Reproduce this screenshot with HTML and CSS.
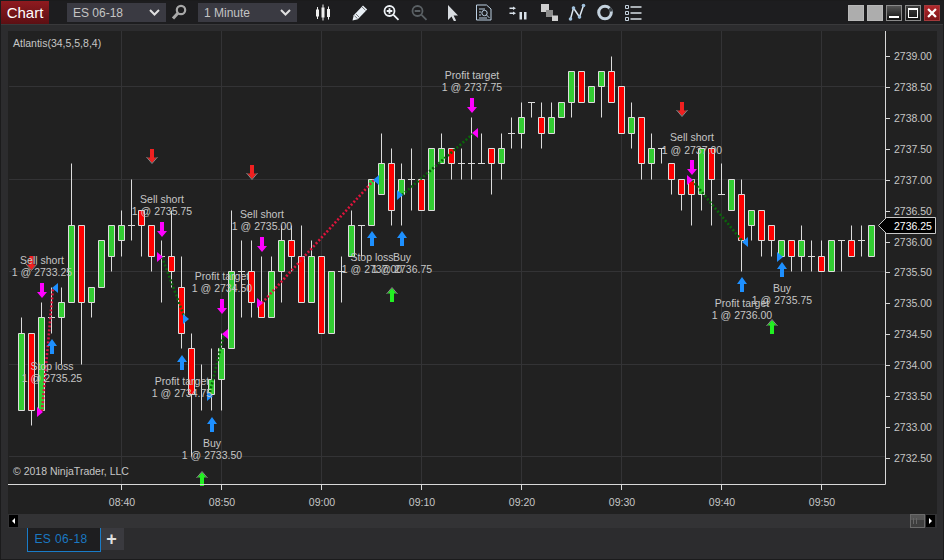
FILE: index.html
```html
<!DOCTYPE html>
<html lang="en">
<head>
<meta charset="utf-8">
<title>Chart</title>
<link rel="stylesheet" href="styles.css">
</head>
<body>
<div class="window">
  <header class="toolbar">
    <button class="chart-btn">Chart</button>
    <div class="select select-instrument"><span>ES 06-18</span><svg class="chev" viewBox="0 0 11 7"><path d="M1 1l4.500 4.500L10 1"/></svg></div>
    <svg class="ic ic-search" viewBox="0 0 18 18"><circle cx="11" cy="7" r="4.200"/><path d="M8 10l-5 5.500"/></svg>
    <div class="select select-interval"><span>1 Minute</span><svg class="chev" viewBox="0 0 11 7"><path d="M1 1l4.500 4.500L10 1"/></svg></div>
    <svg class="ic ic-candles" viewBox="0 0 18 18"><path class="wk" d="M3.500 4v12M9 1.500v16M14.500 3.500v13"/><path class="fl" d="M2 6.500h3v7H2zM7.500 4.500h3v10h-3zM13 6h3v8h-3z"/></svg>
    <svg class="ic ic-pencil" viewBox="0 0 18 18"><path class="fl" d="M1.500 17.500l1.200-5.200 9.300-9.800 4.200 4-9.400 9.700z"/><path class="dk" d="M3.500 12.800l3 2.800M5 11l3 3M11 4l3.500 3.300"/></svg>
    <svg class="ic ic-zoomin" viewBox="0 0 18 18"><circle cx="6.500" cy="8" r="5"/><path d="M10.500 11.800l5 5M6.500 5.200v5.600M3.700 8h5.600"/></svg>
    <svg class="ic ic-zoomout" viewBox="0 0 18 18"><circle cx="7.500" cy="8" r="5"/><path d="M11.500 11.800l5 5M4.700 8h5.600"/></svg>
    <svg class="ic ic-pointer" viewBox="0 0 18 18"><path d="M3 2v15l3.500-3.500 2.600 5 2-1-2.500-5H13z"/></svg>
    <svg class="ic ic-report" viewBox="0 0 18 18"><path class="ol" d="M1.500 2h10l4.500 4v11H1.500z"/><path class="ol" d="M4 6h6M4 9h2M4 12h2M4 15h8"/><circle class="ol" cx="9.500" cy="10" r="2.700"/><path class="ol" d="M11.500 12l3 3"/></svg>
    <svg class="ic ic-bars" viewBox="0 0 18 18"><path class="fl" d="M0.500 4.500h3.500V3.500l3 1.700-3 1.700V6H0.500zM0.500 9.500h3.500V8.500l3 1.700-3 1.700V11H0.500zM10.500 9h2.500v7.500h-2.500zM15 9h2.500v7.500H15z"/></svg>
    <svg class="ic ic-stack" viewBox="0 0 18 18"><path class="a" d="M1 1h8v8H1z"/><path class="b" d="M6 7h7v7H6z"/><path class="a" d="M12 12.500h6V18h-6z"/></svg>
    <svg class="ic ic-node" viewBox="0 0 18 18"><path d="M2.500 16l3-11 6 9 4-11.500"/><circle cx="2.500" cy="16" r="1.800"/><circle cx="5.500" cy="5" r="1.800"/><circle cx="11.500" cy="14" r="1.800"/><circle cx="15.500" cy="2.500" r="1.800"/></svg>
    <svg class="ic ic-ring" viewBox="0 0 18 18"><circle cx="9" cy="9.500" r="6.300"/><path d="M13.500 5.200A6.300 6.300 0 0 1 15.200 8.500"/></svg>
    <svg class="ic ic-list" viewBox="0 0 18 18"><path class="sq" d="M1.500 2.500h3v3h-3zM1.500 8.500h3v3h-3zM1.500 14.500h3v3h-3z"/><path class="ln" d="M6.500 4h11M6.500 10h11M6.500 16h11"/></svg>
    <div class="win-btns">
      <span class="wb wb-blank"></span>
      <span class="wb wb-blank"></span>
      <span class="wb wb-min"><i></i></span>
      <span class="wb wb-max"><i></i></span>
      <span class="wb wb-close"><svg viewBox="0 0 16 16"><path d="M3.500 3.500l9 9M12.500 3.500l-9 9"/></svg></span>
    </div>
  </header>

  <main class="panel">
    <svg class="chart" viewBox="8 31 929 483" width="929" height="483">
      <path class="grid" d="M121.500 31V484M221.500 31V484M321.500 31V484M421.500 31V484M521.500 31V484M621.500 31V484M721.500 31V484M821.500 31V484M9 86.500H885M9 179.500H885M9 271.500H885M9 364.500H885M9 456.500H885"/>

      <path class="wick" d="M21.500 317.500V410.500M31.500 333.500V425.500M41.500 302.500V410.500M51.500 287.500V333.500M48 317.500h7M61.500 287.500V364.500M71.500 163.500V302.500M81.500 225.500V364.500M91.500 287.500V317.500M111.500 225.500V271.500M121.500 210.500V256.500M131.500 179.500V240.500M128 225.500h7M141.500 210.500V256.500M151.500 225.500V271.500M161.500 240.500V302.500M158 256.500h7M171.500 210.500V287.500M181.500 256.500V348.500M191.500 333.500V456.500M201.500 364.500V410.500M211.500 348.500V410.500M221.500 333.500V410.500M231.500 210.500V348.500M241.500 240.500V317.500M238 271.500h7M251.500 240.500V317.500M261.500 256.500V317.500M271.500 256.500V317.500M281.500 225.500V302.500M291.500 225.500V271.500M301.500 225.500V302.500M311.500 240.500V302.500M341.500 256.500V302.500M338 271.500h7M351.500 210.500V256.500M361.500 225.500V256.500M358 225.500h7M381.500 133.500V194.500M391.500 148.500V225.500M401.500 163.500V225.500M411.500 148.500V210.500M408 179.500h7M441.500 133.500V163.500M451.500 148.500V179.500M461.500 148.500V179.500M458 163.500h7M471.500 117.500V179.500M468 163.500h7M481.500 133.500V163.500M478 163.500h7M491.500 148.500V194.500M501.500 133.500V179.500M511.500 117.500V148.500M508 133.500h7M521.500 102.500V148.500M531.500 102.500V117.500M528 102.500h7M541.500 102.500V148.500M551.500 102.500V133.500M571.500 71.500V117.500M601.500 71.500V117.500M611.500 56.500V102.500M631.500 102.500V148.500M641.500 117.500V179.500M651.500 133.500V179.500M661.500 148.500V163.500M658 148.500h7M671.500 163.500V194.500M681.500 179.500V210.500M691.500 179.500V225.500M701.500 148.500V210.500M711.500 148.500V225.500M721.500 163.500V194.500M718 194.500h7M741.500 179.500V271.500M751.500 210.500V240.500M761.500 210.500V256.500M771.500 225.500V256.500M791.500 240.500V271.500M801.500 225.500V271.500M811.500 240.500V271.500M808 256.500h7M821.500 240.500V271.500M841.500 240.500V271.500M838 240.500h7M851.500 225.500V256.500M861.500 225.500V256.500M858 240.500h7"/>
      <path class="up" d="M18.500 333.500h6V410.500h-6zM38.500 317.500h6V410.500h-6zM58.500 302.500h6V317.500h-6zM68.500 225.500h6V302.500h-6zM88.500 287.500h6V302.500h-6zM98.500 240.500h6V287.500h-6zM108.500 225.500h6V256.500h-6zM118.500 225.500h6V240.500h-6zM208.500 379.500h6V394.500h-6zM218.500 348.500h6V379.500h-6zM228.500 271.500h6V348.500h-6zM268.500 271.500h6V317.500h-6zM278.500 240.500h6V271.500h-6zM308.500 256.500h6V302.500h-6zM328.500 271.500h6V333.500h-6zM348.500 225.500h6V256.500h-6zM368.500 179.500h6V225.500h-6zM378.500 163.500h6V194.500h-6zM398.500 179.500h6V194.500h-6zM428.500 148.500h6V210.500h-6zM438.500 148.500h6V163.500h-6zM498.500 148.500h6V163.500h-6zM518.500 117.500h6V133.500h-6zM548.500 117.500h6V133.500h-6zM558.500 102.500h6V117.500h-6zM568.500 71.500h6V102.500h-6zM588.500 86.500h6V102.500h-6zM598.500 71.500h6V86.500h-6zM628.500 117.500h6V133.500h-6zM648.500 148.500h6V163.500h-6zM698.500 148.500h6V194.500h-6zM728.500 179.500h6V210.500h-6zM748.500 210.500h6V225.500h-6zM778.500 240.500h6V256.500h-6zM798.500 240.500h6V256.500h-6zM828.500 240.500h6V271.500h-6zM868.500 225.500h6V256.500h-6z"/>
      <path class="down" d="M28.500 333.500h6V410.500h-6zM78.500 225.500h6V302.500h-6zM138.500 210.500h6V225.500h-6zM148.500 225.500h6V256.500h-6zM168.500 256.500h6V271.500h-6zM178.500 287.500h6V333.500h-6zM188.500 348.500h6V394.500h-6zM248.500 271.500h6V302.500h-6zM258.500 302.500h6V317.500h-6zM288.500 240.500h6V256.500h-6zM298.500 256.500h6V302.500h-6zM318.500 256.500h6V333.500h-6zM388.500 163.500h6V210.500h-6zM418.500 179.500h6V210.500h-6zM448.500 148.500h6V163.500h-6zM488.500 148.500h6V163.500h-6zM538.500 117.500h6V133.500h-6zM578.500 71.500h6V102.500h-6zM608.500 71.500h6V102.500h-6zM618.500 86.500h6V133.500h-6zM638.500 117.500h6V163.500h-6zM668.500 163.500h6V179.500h-6zM678.500 179.500h6V194.500h-6zM688.500 179.500h6V194.500h-6zM708.500 148.500h6V179.500h-6zM738.500 194.500h6V240.500h-6zM758.500 210.500h6V240.500h-6zM768.500 225.500h6V240.500h-6zM788.500 240.500h6V256.500h-6zM818.500 256.500h6V271.500h-6zM848.500 240.500h6V256.500h-6z"/>

      <path class="trade-loss" d="M42 411L53 288M262 303L374 180"/>
      <path class="trade-win" d="M162 257L185 319M209 396L224 334M402 195L474 133M692 180L743 242"/>

      <defs>
        <path id="arrow-up" d="M0 0L5 7H2V15H-2V7H-5Z"/>
        <path id="arrow-down" d="M-2 0H2V9H5L0 15L-5 9H-2Z"/>
        <path id="tri-right" d="M0 -5L6 0L0 5Z"/>
        <path id="tri-left" d="M0 -5L-6 0L0 5Z"/>
        <g id="signal-up"><path d="M0 1L4.500 6.500H2V15H-2V6.500H-4.500Z"/><path class="sig-edge" d="M-5.500 7L0 0.500L5.500 7"/></g>
        <g id="signal-down"><path d="M-2 0H2V8.500H4.500L0 14L-4.500 8.500H-2Z"/><path class="sig-edge" d="M-5.500 8L0 14.500L5.500 8"/></g>
      </defs>
      <g class="exit-buy">
        <use href="#arrow-up" x="52" y="339"/><use href="#arrow-up" x="182" y="355"/><use href="#arrow-up" x="212" y="417"/><use href="#arrow-up" x="372" y="231"/><use href="#arrow-up" x="402" y="231"/><use href="#arrow-up" x="742" y="277"/><use href="#arrow-up" x="782" y="262"/>
        <use href="#tri-left" x="58" y="288"/><use href="#tri-right" x="183" y="319"/><use href="#tri-right" x="207" y="396"/><use href="#tri-left" x="379" y="180"/><use href="#tri-right" x="397" y="195"/><use href="#tri-left" x="748" y="242"/><use href="#tri-right" x="777" y="257"/>
      </g>
      <g class="exit-sell">
        <use href="#arrow-down" x="42" y="283"/><use href="#arrow-down" x="162" y="222"/><use href="#arrow-down" x="222" y="299"/><use href="#arrow-down" x="262" y="237"/><use href="#arrow-down" x="472" y="98"/><use href="#arrow-down" x="692" y="160"/>
        <use href="#tri-right" x="157" y="257"/><use href="#tri-right" x="37" y="412"/><use href="#tri-left" x="228" y="334"/><use href="#tri-right" x="257" y="303"/><use href="#tri-left" x="478" y="133"/><use href="#tri-right" x="687" y="180"/>
      </g>
      <g class="sig-up">
        <use href="#signal-up" x="202" y="471"/><use href="#signal-up" x="392" y="287"/><use href="#signal-up" x="772" y="319"/>
      </g>
      <g class="sig-down">
        <use href="#signal-down" x="152" y="149"/><use href="#signal-down" x="252" y="165"/><use href="#signal-down" x="682" y="102"/><use href="#signal-down" x="31.500" y="256"/>
      </g>

      <g class="note">
        <text x="42" y="264">Sell short</text><text x="42" y="276">1 @ 2733.25</text>
        <text x="162" y="203">Sell short</text><text x="162" y="215">1 @ 2735.75</text>
        <text x="262" y="218">Sell short</text><text x="262" y="230">1 @ 2735.00</text>
        <text x="222" y="280">Profit target</text><text x="222" y="292">1 @ 2734.50</text>
        <text x="182" y="385">Profit target</text><text x="182" y="397">1 @ 2734.75</text>
        <text x="52" y="370">Stop loss</text><text x="52" y="382">1 @ 2735.25</text>
        <text x="212" y="447">Buy</text><text x="212" y="459">1 @ 2733.50</text>
        <text x="372" y="261">Stop loss</text><text x="372" y="273">1 @ 2737.00</text>
        <text x="402" y="261">Buy</text><text x="402" y="273">1 @ 2736.75</text>
        <text x="472" y="79">Profit target</text><text x="472" y="91">1 @ 2737.75</text>
        <text x="692" y="141">Sell short</text><text x="692" y="154">1 @ 2737.00</text>
        <text x="742" y="307">Profit target</text><text x="742" y="319">1 @ 2736.00</text>
        <text x="782" y="292">Buy</text><text x="782" y="304">1 @ 2735.75</text>
      </g>

      <text class="label" x="13" y="47">Atlantis(34,5,5,8,4)</text>
      <text class="label" x="13" y="475">© 2018 NinjaTrader, LLC</text>

      <path class="axis" d="M885.500 31V484.500H8M886 56.500h4M886 87.500h4M886 118.500h4M886 149.500h4M886 180.500h4M886 211.500h4M886 242.500h4M886 272.500h4M886 303.500h4M886 334.500h4M886 365.500h4M886 396.500h4M886 427.500h4M886 458.500h4M121.500 484v6M221.500 484v6M321.500 484v6M421.500 484v6M521.500 484v6M621.500 484v6M721.500 484v6M821.500 484v6"/>
      <g class="price">
        <text x="894" y="60">2739.00</text><text x="894" y="91">2738.50</text><text x="894" y="122">2738.00</text><text x="894" y="153">2737.50</text><text x="894" y="184">2737.00</text><text x="894" y="215">2736.50</text><text x="894" y="246">2736.00</text><text x="894" y="276">2735.50</text><text x="894" y="307">2735.00</text><text x="894" y="338">2734.50</text><text x="894" y="369">2734.00</text><text x="894" y="400">2733.50</text><text x="894" y="431">2733.00</text><text x="894" y="462">2732.50</text>
      </g>
      <g class="time">
        <text x="122" y="506">08:40</text><text x="222" y="506">08:50</text><text x="322" y="506">09:00</text><text x="422" y="506">09:10</text><text x="522" y="506">09:20</text><text x="622" y="506">09:30</text><text x="722" y="506">09:40</text><text x="822" y="506">09:50</text>
      </g>
      <path class="last-box" d="M878.500 225.500L886.500 217.500H935.500V233.500H886.500Z"/>
      <text class="last-text" x="894" y="230">2736.25</text>
    </svg>
    <div class="scrollbar">
      <span class="sb-btn sb-left"></span>
      <span class="sb-thumb"></span>
      <span class="sb-btn sb-right"></span>
    </div>
  </main>

  <nav class="tabs">
    <div class="tab">ES 06-18</div>
    <div class="tab-add">+</div>
  </nav>
</div>
</body>
</html>
```
FILE: styles.css
```css
* { box-sizing: border-box; }
html, body { margin: 0; padding: 0; background: #2c2c2e; }
body { font-family: "Liberation Sans", Arial, sans-serif; overflow: hidden; }

.window {
  width: 944px;
  height: 560px;
  display: flex;
  flex-direction: column;
  outline: 1px solid #1b1b1c;
  outline-offset: -1px;
  overflow: hidden;
}

/* toolbar */
.toolbar {
  height: 25px;
  flex: none;
  display: flex;
  align-items: center;
  padding: 1px 4px 0 1px;
  background: #1d1d1f;
  border-bottom: 1px solid #39393b;
}
.chart-btn {
  width: 48px;
  height: 23px;
  margin: 0;
  padding: 0;
  border: 0;
  color: #fff;
  font: 15px "Liberation Sans", Arial, sans-serif;
  background: linear-gradient(#8f1a1f, #5c0f13);
}
.select {
  width: 99px;
  height: 19px;
  padding: 0 6px;
  display: flex;
  align-items: center;
  justify-content: space-between;
  background: #3a3a42;
  color: #c4c4c4;
  font-size: 12px;
}
.select-instrument { margin-left: 18px; }
.select-interval { margin-left: 10px; }
.chev { width: 11px; height: 7px; }
.chev path { fill: none; stroke: #e0e0e0; stroke-width: 2; }

.ic { width: 18px; height: 18px; flex: none; margin-bottom: 1px; }
.ic-search { margin-left: 4px; }
.ic-search circle, .ic-search path { fill: none; stroke: #a8a8a8; stroke-width: 2.2; }
.ic-search path { stroke-width: 3; }
.ic-candles { margin-left: 17px; }
.ic-candles .wk { fill: none; stroke: #eee; stroke-width: 1; }
.ic-candles .fl { fill: #eee; }
.ic-pencil { margin-left: 19px; }
.ic-pencil .fl { fill: #e8eef4; }
.ic-pencil .dk { fill: none; stroke: #555; stroke-width: .8; }
.ic-zoomin { margin-left: 14px; }
.ic-zoomin circle, .ic-zoomin path { fill: none; stroke: #eef2f6; stroke-width: 1.800; }
.ic-zoomout { margin-left: 9px; }
.ic-zoomout circle, .ic-zoomout path { fill: none; stroke: #5a6064; stroke-width: 1.800; }
.ic-pointer { margin-left: 17px; }
.ic-pointer path { fill: #d8dce0; }
.ic-report { margin-left: 12px; }
.ic-report .ol { fill: none; stroke: #bcd0e2; stroke-width: 1; }
.ic-bars { margin-left: 16px; }
.ic-bars .fl { fill: #d8e0e8; }
.ic-stack { margin-left: 13px; }
.ic-stack .a { fill: #d0d0d0; }
.ic-stack .b { fill: #8c8c8c; }
.ic-node { margin-left: 10px; }
.ic-node path { fill: none; stroke: #dbe6f0; stroke-width: 1.500; }
.ic-node circle { fill: #9fc0dc; }
.ic-ring { margin-left: 10px; }
.ic-ring circle { fill: none; stroke: #c4d2de; stroke-width: 3; }
.ic-ring path { fill: none; stroke: #3c4349; stroke-width: 3.200; }
.ic-list { margin-left: 10px; }
.ic-list .sq { fill: none; stroke: #c4d2de; stroke-width: 1; }
.ic-list .ln { fill: none; stroke: #d8dfe6; stroke-width: 1.500; }

.win-btns { margin-left: auto; display: flex; gap: 3px; margin-top: 1px; }
.wb {
  width: 16px;
  height: 16px;
  display: flex;
  align-items: center;
  justify-content: center;
  border: 1px solid #8a8a8a;
}
.wb-blank { background: #adadad; border-color: #b8b8b8; }
.wb-min { background: linear-gradient(#555, #111); align-items: flex-end; padding-bottom: 2px; }
.wb-min i { display: block; width: 10px; height: 2px; background: #fff; }
.wb-max { background: linear-gradient(#3c3c3c, #141414); }
.wb-max i { display: block; width: 10px; height: 10px; border: 1px solid #fff; border-top-width: 2px; }
.wb-close { background: linear-gradient(#b2282c, #7e1418); border-color: #a23a3c; }
.wb-close svg { width: 14px; height: 14px; }
.wb-close path { fill: none; stroke: #fff; stroke-width: 2.600; }

/* chart panel */
.panel {
  width: 929px;
  height: 497px;
  flex: none;
  margin: 6px 0 0 8px;
  background: #212121;
}
.chart { display: block; }
.grid { fill: none; stroke: #333335; stroke-width: 1; }
.wick { fill: none; stroke: #dcdcdc; stroke-width: 1; }
.up { fill: #32cd32; stroke: #dcdcdc; stroke-width: 1; }
.down { fill: #ff0000; stroke: #dcdcdc; stroke-width: 1; }
.trade-loss { fill: none; stroke: #dc143c; stroke-width: 2.600; stroke-dasharray: 2 2; }
.trade-win { fill: none; stroke: #0a660a; stroke-width: 2.600; stroke-dasharray: 2 2; }
.exit-buy { fill: #1e90ff; }
.exit-sell { fill: #ff00ff; }
.sig-up { fill: #22f022; }
.sig-down { fill: #f02020; }
.sig-edge { fill: none; stroke: #8a8a8a; stroke-width: 1; }
.note text { fill: #c6c6c6; font-size: 10.500px; text-anchor: middle; }
.label { fill: #c6c6c6; font-size: 10.500px; }
.axis { fill: none; stroke: #d8d8d8; stroke-width: 1; }
.price text { fill: #c6c6c6; font-size: 10.500px; }
.time text { fill: #c6c6c6; font-size: 10.500px; text-anchor: middle; }
.last-box { fill: #000; stroke: #c8c8c8; stroke-width: 1; }
.last-text { fill: #fff; font-size: 10.500px; }

.scrollbar {
  height: 14px;
  display: flex;
  align-items: center;
  padding: 0 2px 0 1px;
  background: #333335;
}
.sb-btn { width: 9px; height: 12px; background: #000; position: relative; }
.sb-btn::after {
  content: "";
  position: absolute;
  top: 3px;
  border-style: solid;
  border-width: 3px 0;
  border-color: transparent;
}
.sb-left::after { left: 3px; border-right: 3px solid #fff; }
.sb-right::after { left: 3px; border-left: 3px solid #fff; }
.sb-thumb {
  width: 15px;
  height: 14px;
  margin-left: auto;
  margin-right: 1px;
  border: 1px solid #6a6a6a;
  background:
    linear-gradient(90deg, transparent 2px, #666 2px, #666 3px, transparent 3px, transparent 5px, #666 5px, #666 6px, transparent 6px) 0 3px / 100% 6px no-repeat,
    linear-gradient(#555 45%, #3e3e3e 45%);
}

/* tabs */
.tabs {
  flex: none;
  display: flex;
  align-items: flex-start;
  padding-left: 27px;
}
.tab {
  width: 74px;
  height: 24px;
  padding: 0 6px 2px 0;
  display: flex;
  align-items: center;
  justify-content: center;
  background: #1e1e20;
  border: 1px solid #1a7cc8;
  border-top: 0;
  color: #1a78c2;
  font-size: 12px;
  letter-spacing: .4px;
}
.tab-add {
  width: 23px;
  height: 22px;
  padding-right: 2px;
  display: flex;
  align-items: center;
  justify-content: center;
  background: #3a3a3f;
  color: #e0e0e0;
  font-size: 18px;
  font-weight: bold;
}
```
